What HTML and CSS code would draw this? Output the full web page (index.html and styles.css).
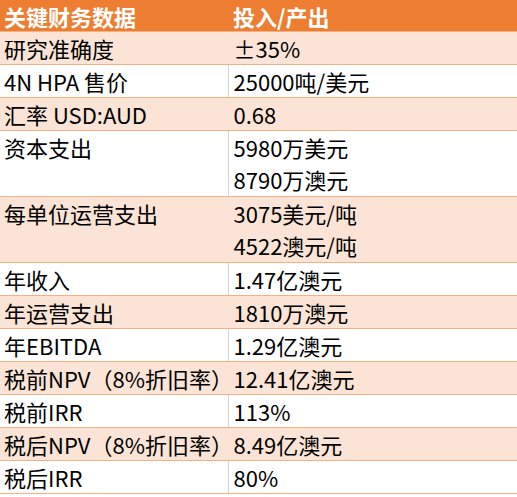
FILE: index.html
```html
<!DOCTYPE html>
<html lang="zh-CN">
<head>
    <meta charset="UTF-8">
    <meta name="viewport" content="width=device-width, initial-scale=1.0">
    <link rel="stylesheet" href="styles.css">
    <title>关键财务数据</title>
</head>
<body>
    <!-- 关键财务数据表 -->
    <table class="fin-table">
        <colgroup>
            <col class="col-key">
            <col class="col-val">
        </colgroup>
        <thead>
            <tr>
                <th>关键财务数据</th>
                <th>投入/产出</th>
            </tr>
        </thead>
        <tbody>
            <tr class="odd"><td>研究准确度</td><td>±35%</td></tr>
            <tr><td>4N HPA 售价</td><td>25000吨/美元</td></tr>
            <tr class="odd"><td>汇率 USD:AUD</td><td>0.68</td></tr>
            <tr class="tall"><td>资本支出</td><td>5980万美元<br>8790万澳元</td></tr>
            <tr class="odd tall"><td>每单位运营支出</td><td>3075美元/吨<br>4522澳元/吨</td></tr>
            <tr><td>年收入</td><td>1.47亿澳元</td></tr>
            <tr class="odd"><td>年运营支出</td><td>1810万澳元</td></tr>
            <tr><td>年EBITDA</td><td>1.29亿澳元</td></tr>
            <tr class="odd"><td>税前NPV（8%折旧率）</td><td>12.41亿澳元</td></tr>
            <tr><td>税前IRR</td><td>113%</td></tr>
            <tr class="odd"><td>税后NPV（8%折旧率）</td><td>8.49亿澳元</td></tr>
            <tr><td>税后IRR</td><td>80%</td></tr>
        </tbody>
    </table>
</body>
</html>
```

FILE: styles.css
```css
    body {
        font-family: "Noto Sans CJK SC", "Noto Sans", sans-serif;
        margin: 0;
        padding: 0;
        background: #fff;
        color: #000;
    }

    .fin-table {
        width: 517px;
        table-layout: fixed;
        border-collapse: collapse;
        font-size: 22px;
    }
    .col-key {
        width: 228px;
    }

    .fin-table th {
        background: #ed7d31;
        color: #fff;
        font-weight: bold;
        text-align: left;
        height: 29px;
        line-height: 29px;
        padding: 2px 0 0 4px;
        border-bottom: 1px solid #f4b183;
        white-space: nowrap;
    }
    .fin-table th + th {
        padding-left: 5px;
    }

    .fin-table td {
        height: 32px;
        line-height: 32px;
        padding: 0 0 0 4px;
        vertical-align: top;
        border-bottom: 1px solid #f4b183;
        white-space: nowrap;
    }
    .fin-table td + td {
        padding-left: 5px;
        border-left: 1px solid #d4d4d4;
    }

    .fin-table tr.odd td {
        background: #fbe4d5;
    }
    .fin-table tr.odd td + td {
        border-left-color: #fbe4d5;
    }

    .fin-table tr.tall td {
        height: 65px;
    }
```
